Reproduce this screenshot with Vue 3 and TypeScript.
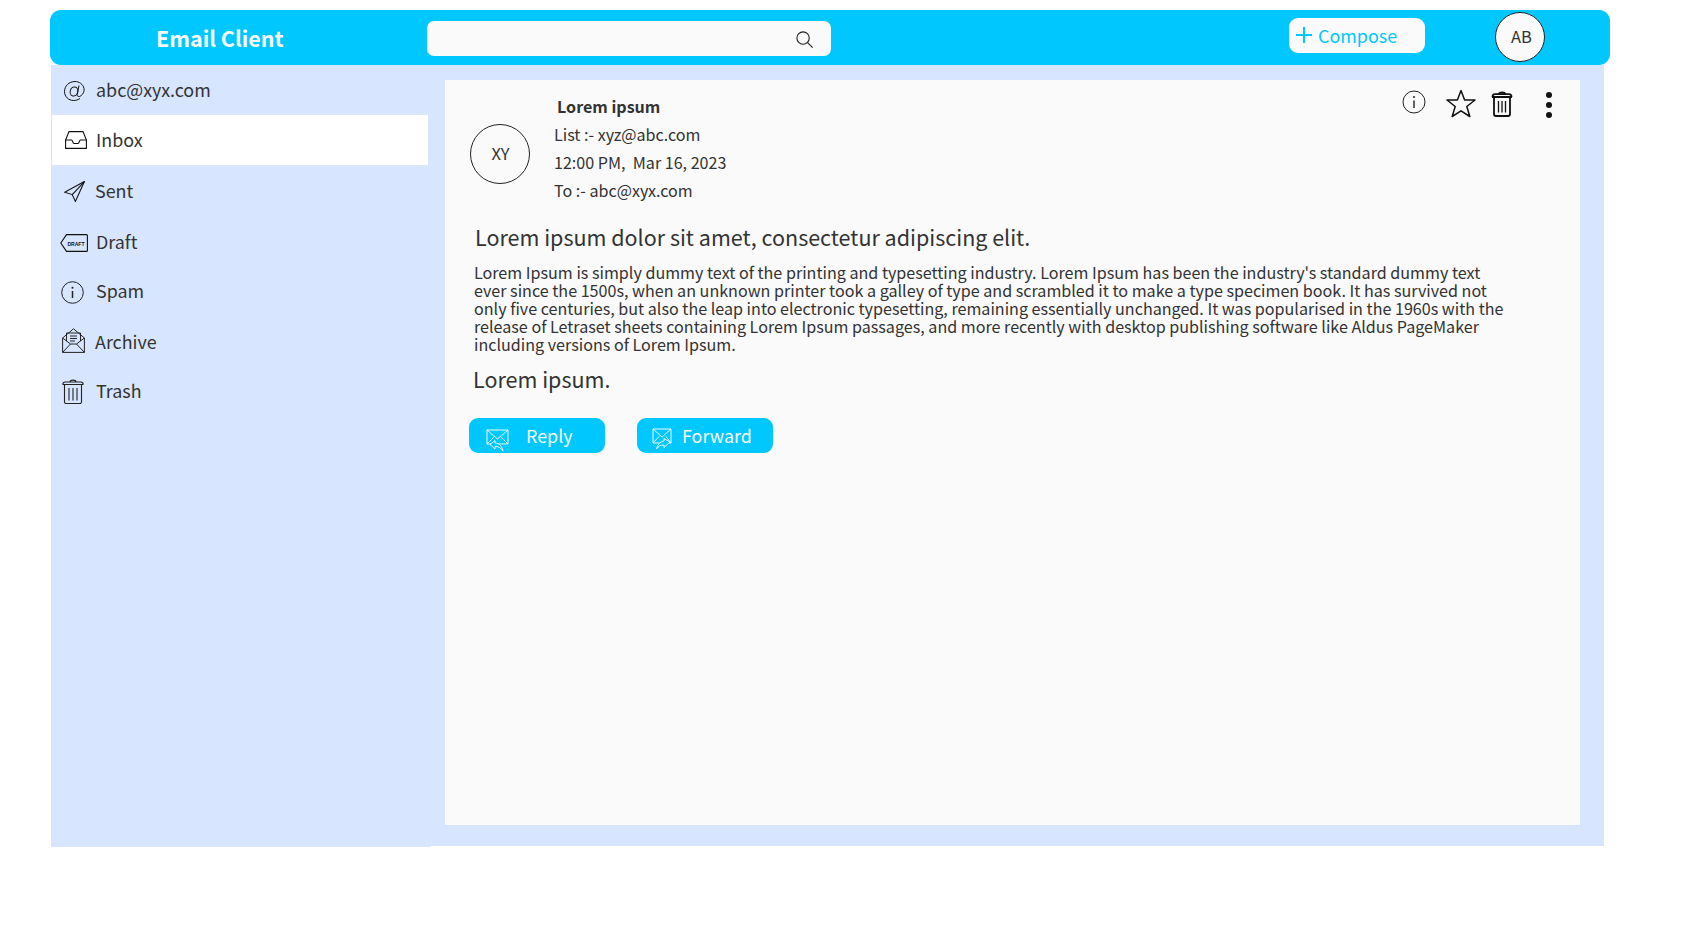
<script setup lang="ts">
interface NavItem {
  label: string
  icon: string
  active?: boolean
}

const navItems: NavItem[] = [
  { label: 'abc@xyx.com', icon: 'at' },
  { label: 'Inbox', icon: 'inbox', active: true },
  { label: 'Sent', icon: 'sent' },
  { label: 'Draft', icon: 'draft' },
  { label: 'Spam', icon: 'spam' },
  { label: 'Archive', icon: 'archive' },
  { label: 'Trash', icon: 'trash' },
]
</script>

<template>
  <div class="page">
    <header class="topbar">
      <div class="brand">Email Client</div>
      <div class="search">
        <svg class="search-icon" viewBox="0 0 20 20" fill="none" stroke="#222" stroke-width="1.2">
          <circle cx="8.5" cy="8.5" r="6.5" />
          <path d="M13.3 13.3 18.5 18.5" />
        </svg>
      </div>
      <button class="compose">
        <svg class="plus" viewBox="0 0 16 16" stroke="#00c8ff" stroke-width="2"><path d="M8 0v16M0 8h16" /></svg>
        Compose
      </button>
      <div class="avatar-ab">AB</div>
    </header>

    <div class="body">
      <aside class="sidebar">
        <div v-for="item in navItems" :key="item.label" class="nav-row" :class="[item.icon, { active: item.active }]">
          <span class="nav-icon">
            <svg v-if="item.icon === 'at'" width="21" height="20" viewBox="0 0 21 20" fill="none" stroke="#111" stroke-width="1">
              <ellipse cx="10" cy="10.500" rx="3.800" ry="4.600" transform="rotate(15 10 10.500)" />
              <path d="M15 4.500l-1.800 9c-.4 2 1.800 2.800 3.700 1.300C19.500 12.800 20.500 10 20 7.500 19 3 15 .5 11 .5 5 .5.500 5 .5 10.500c0 5 4 9 9 9 2.500 0 4.500-.7 6.500-2" />
            </svg>
            <svg v-else-if="item.icon === 'inbox'" width="22" height="18" viewBox="0 0 22 18" fill="none" stroke="#111" stroke-width="1.100">
              <path d="M.6 9 4 .6h14L21.400 9v8.400H.6z" />
              <path d="M.6 9h6c1 0 1 3.500 2.500 3.500h3.800c1.500 0 1.500-3.500 2.500-3.500h6" />
            </svg>
            <svg v-else-if="item.icon === 'sent'" width="21" height="21" viewBox="0 0 21 21" fill="none" stroke="#111" stroke-width="1.100">
              <path d="M20.400.6.600 11.200l7.600 2.400 3.200 6.800z" />
              <path d="M20.400.6 8.200 13.600" />
            </svg>
            <svg v-else-if="item.icon === 'draft'" width="28" height="18" viewBox="0 0 28 18" fill="none" stroke="#111" stroke-width="1.100">
              <path d="M6.500.6H26.500c.6 0 .9.4.9 1v14.800c0 .6-.3 1-.9 1H6.500L.8 9z" />
              <text x="7.500" y="11.500" class="draft-text" textLength="17" lengthAdjust="spacingAndGlyphs">DRAFT</text>
            </svg>
            <svg v-else-if="item.icon === 'spam'" width="23" height="23" viewBox="0 0 23 23" fill="none" stroke="#222" stroke-width="1">
              <circle cx="11.500" cy="11.500" r="10.800" />
              <path d="M11.500 10v7" stroke-width="1.500" />
              <circle cx="11.500" cy="6.800" r="1" fill="#222" stroke="none" />
            </svg>
            <svg v-else-if="item.icon === 'archive'" width="23" height="25" viewBox="0 0 23 25" fill="none" stroke="#222" stroke-width="1">
              <path d="M.6 10v14.400h21.800V10L11.500.8z" />
              <path d="M.6 24.400 8.500 16h6l7.900 8.400M.6 10l7.900 6M22.400 10l-7.900 6" />
              <path d="M4.500 13V5h14v8M8 8h7M8 10.500h7M8 13h5" />
            </svg>
            <svg v-else width="22" height="25" viewBox="0 0 22 25" fill="none" stroke="#222" stroke-width="1.100">
              <path d="M.6 5.500h20.800M.8 5.500C.8 4 1.800 3 3.300 3h15.400c1.500 0 2.500 1 2.500 2.500M8 3c0-2.500 6-2.500 6 0" />
              <path d="M2.500 6v17c0 1 .6 1.500 1.500 1.500h14c1 0 1.500-.5 1.500-1.500V6" />
              <path d="M7 9v12.500M11 9v12.500M15 9v12.500" />
            </svg>
          </span>
          <span class="nav-label">{{ item.label }}</span>
        </div>
      </aside>

      <main class="main">
        <section class="card">
          <div class="mail-head">
            <div class="avatar-xy">XY</div>
            <div class="meta">
              <div class="subject">Lorem ipsum</div>
              <div>List :- xyz@abc.com</div>
              <div>12:00 PM,&nbsp; Mar 16, 2023</div>
              <div>To :- abc@xyx.com</div>
            </div>
            <div class="tools">
              <svg class="tool-info" viewBox="0 0 24 24" fill="none" stroke="#222" stroke-width="1">
                <circle cx="12" cy="12" r="11" />
                <path d="M12 10.500v7.500" stroke-width="1.400" />
                <circle cx="12" cy="7" r="1" fill="#222" stroke="none" />
              </svg>
              <svg class="tool-star" viewBox="0 0 30 29" fill="none" stroke="#111" stroke-width="1.500">
                <path d="M15 1.500 18.600 11H29l-8.200 6.500 3 10L15 21.800 6.200 27.500l3-10L1 11h10.400z" stroke-linejoin="round" />
              </svg>
              <svg class="tool-trash" viewBox="0 0 22 26" fill="none" stroke="#111" stroke-width="1.800">
                <path d="M1 6h20M1.500 6c0-2 1-2.800 2.500-2.800h14c1.500 0 2.500.8 2.500 2.800" />
                <path d="M8 3c0-2 6-2 6 0" />
                <path d="M3 6.500v16.500c0 1 .8 2 2 2h12c1.200 0 2-1 2-2V6.500" />
                <path d="M7.500 10v11.500M11 10v11.500M14.500 10v11.500" stroke-width="1.300" />
              </svg>
              <span class="tool-dots"><i></i><i></i><i></i></span>
            </div>
          </div>

          <h2 class="headline">Lorem ipsum dolor sit amet, consectetur adipiscing elit.</h2>
          <p class="text">
            Lorem Ipsum is simply dummy text of the printing and typesetting industry. Lorem Ipsum has been the industry's standard dummy text<br />
            ever since the 1500s, when an unknown printer took a galley of type and scrambled it to make a type specimen book. It has survived not<br />
            only five centuries, but also the leap into electronic typesetting, remaining essentially unchanged. It was popularised in the 1960s with the<br />
            release of Letraset sheets containing Lorem Ipsum passages, and more recently with desktop publishing software like Aldus PageMaker<br />
            including versions of Lorem Ipsum.
          </p>
          <div class="closing">Lorem ipsum.</div>

          <div class="actions">
            <button class="action reply">
              <svg width="23" height="23" viewBox="0 0 23 23" fill="none" stroke="#fff" stroke-width=".9">
                <path d="M1 1h21v14H1zM1 1l10.500 9L22 1M1 15l7.500-7.500M22 15l-7.500-7.500" />
                <path d="M4 15.500 9 11.500v2.500c4 0 7 3 8 8-2-3-4-4.500-8-4.500V20z" fill="#00c8ff" />
              </svg>
              <span>Reply</span>
            </button>
            <button class="action forward">
              <svg width="20" height="23" viewBox="0 0 20 23" fill="none" stroke="#fff" stroke-width=".9">
                <path d="M1 1h18v14H1zM1 1l9 8 9-8M1 15l6-6.500M19 15l-5-6.500" />
                <path d="M18 14l-6-3.500v2.500C8 13.500 5.500 17 4.500 21c2-3 4-4 7.500-4v2.500z" fill="#00c8ff" />
              </svg>
              <span>Forward</span>
            </button>
          </div>
        </section>
      </main>
    </div>
  </div>
</template>

<style>
body { background: #fff; }
</style>

<style scoped>
.page {
  width: 1690px;
  height: 946px;
  box-sizing: border-box;
  padding: 10px 0 0 50px;
  font-family: "Noto Sans CJK SC", "Noto Sans", sans-serif;
  color: #333;
  overflow: hidden;
}

.topbar {
  width: 1560px;
  height: 55px;
  background: #00c8ff;
  border-radius: 11px;
  display: flex;
  align-items: center;
}
.brand {
  width: 377px;
  padding-left: 106px;
  box-sizing: border-box;
  font-size: 21.5px;
  font-weight: 700;
  color: #fafafa;
  margin-top: -1px;
}
.search {
  width: 404px;
  height: 35px;
  margin-top: 1px;
  background: #fafafa;
  border-radius: 7px;
  display: flex;
  align-items: center;
  justify-content: flex-end;
  padding-right: 17px;
  box-sizing: border-box;
}
.search-icon { width: 19px; height: 19px; margin-top: 2px; }
.compose {
  width: 136px;
  height: 35px;
  margin-left: 458px;
  margin-top: -5px;
  background: #fafafa;
  border: none;
  border-radius: 9px;
  color: #00c8ff;
  font-family: inherit;
  font-size: 17.9px;
  padding: 0 0 0 7px;
  display: flex;
  align-items: center;
  gap: 6px;
}
.plus { width: 16px; height: 16px; }
.avatar-ab {
  width: 50px;
  height: 50px;
  box-sizing: border-box;
  margin-left: 70px;
  margin-top: -1px;
  padding: 0 0 2px 3px;
  border: 1px solid #222;
  border-radius: 50%;
  background: #fafafa;
  display: flex;
  align-items: center;
  justify-content: center;
  font-size: 16.5px;
}

.body { display: flex; align-items: flex-start; margin-left: 1px; }
.sidebar {
  width: 379px;
  height: 782px;
  background: #d7e5fe;
  padding-left: 1px;
  box-sizing: border-box;
}
.nav-row {
  width: 376px;
  height: 50px;
  display: flex;
  align-items: center;
  font-size: 17.9px;
  color: #333;
}
.nav-row.active { background: #fff; }
.nav-icon { display: flex; align-items: center; flex-shrink: 0; }
.nav-icon svg { display: block; }
.nav-label { margin-top: -2px; }
.nav-row.at .nav-icon { padding-left: 12px; width: 32px; margin-top: 2px; }
.nav-row.inbox .nav-icon { padding-left: 13px; width: 31px; }
.nav-row.sent { height: 51px; }
.nav-row.sent .nav-icon { padding-left: 12px; width: 31px; margin-top: 2px; }
.nav-row.draft { height: 51px; }
.nav-row.draft .nav-icon { padding-left: 8px; width: 36px; margin-top: 2px; }
.nav-row.spam { height: 49px; }
.nav-row.spam .nav-icon { padding-left: 9px; width: 35px; margin-top: 2px; }
.nav-row.spam .nav-label { margin-top: -4px; }
.nav-row.archive { height: 51px; }
.nav-row.archive .nav-icon { padding-left: 10px; width: 33px; margin-top: -2px; }
.nav-row.trash { height: 50px; }
.nav-row.trash .nav-icon { padding-left: 10px; width: 34px; margin-top: -2px; }
.nav-row.trash .nav-label { margin-top: -4px; }
.draft-text { font-size: 6px; font-weight: 700; fill: #111; stroke: none; font-family: "Liberation Sans", sans-serif; }

.main {
  width: 1174px;
  height: 781px;
  background: #d7e5fe;
  padding: 15px 24px 21px 15px;
  box-sizing: border-box;
}
.card {
  width: 1135px;
  height: 745px;
  background: #fafafa;
  padding-top: 12px;
  box-sizing: border-box;
}
.mail-head { display: flex; align-items: flex-start; padding-left: 25px; }
.avatar-xy {
  width: 60px;
  height: 60px;
  flex-shrink: 0;
  box-sizing: border-box;
  margin-top: 32px;
  padding: 0 0 3px 1px;
  border: 1px solid #222;
  border-radius: 50%;
  display: flex;
  align-items: center;
  justify-content: center;
  font-size: 16.5px;
}
.meta {
  margin-left: 24px;
  font-size: 16.1px;
  line-height: 28px;
  width: 600px;
  flex-shrink: 0;
}
.subject { font-weight: 700; padding-left: 3px; }
.tools { flex: 1; display: flex; align-items: flex-start; padding-left: 248px; }
.tool-info { width: 24px; height: 24px; margin-top: -2px; flex-shrink: 0; }
.tool-star { width: 30px; height: 29px; margin-left: 20px; margin-top: -3px; flex-shrink: 0; }
.tool-trash { width: 22px; height: 26px; margin-left: 15px; margin-top: -1px; flex-shrink: 0; }
.tool-dots { display: flex; flex-direction: column; gap: 4px; margin-left: 33px; margin-top: 0; }
.tool-dots i { width: 6px; height: 6px; border-radius: 50%; background: #111; display: block; }

.headline {
  margin: 15px 0 0 30px;
  font-size: 21.5px;
  font-weight: 400;
  line-height: 36px;
}
.text {
  margin: 8px 0 0 29px;
  font-size: 16.12px;
  line-height: 18px;
  white-space: nowrap;
}
.closing {
  margin: 8px 0 0 28px;
  font-size: 21.5px;
  line-height: 36px;
}
.actions { display: flex; gap: 32px; margin: 21px 0 0 24px; }
.action {
  width: 136px;
  height: 35px;
  background: #00c8ff;
  border: none;
  border-radius: 9px;
  color: #fafafa;
  font-family: inherit;
  font-size: 17.9px;
  display: flex;
  align-items: center;
  padding: 0;
}
.action span { margin-top: -2px; }
.action.reply svg { margin: 9px 0 0 17px; }
.action.reply span { margin-left: 17px; }
.action.forward svg { margin: 8px 0 0 15px; }
.action.forward span { margin-left: 10px; }
</style>
